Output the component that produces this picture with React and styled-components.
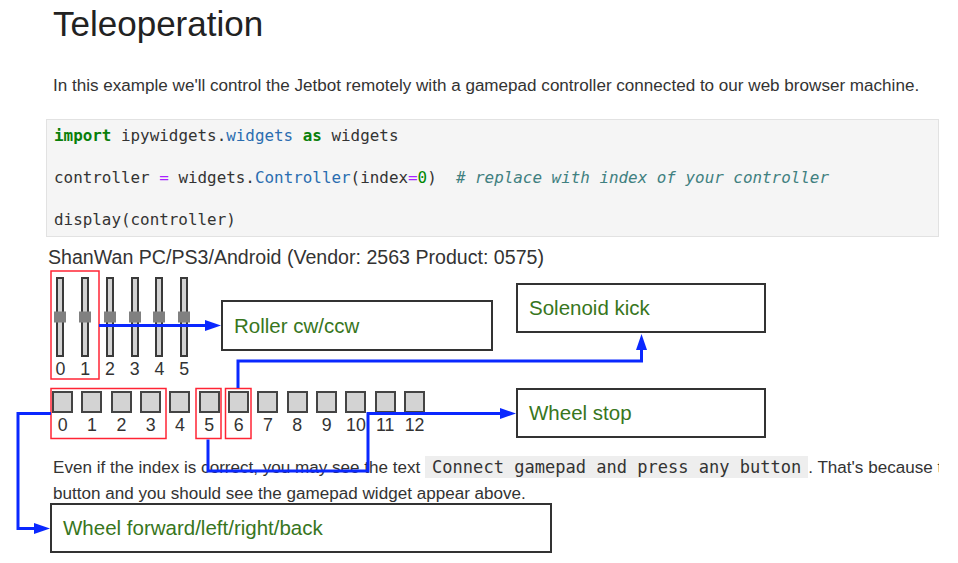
import React from "react";
import styled, { createGlobalStyle } from "styled-components";

const GlobalStyle = createGlobalStyle`
  html, body { margin: 0; padding: 0; background: #fff; }
  body { font-family: "Liberation Sans", Arial, sans-serif; overflow: hidden; }
  #root { width: 958px; height: 563px; }
`;

const Page = styled.div`
  position: relative;
  width: 958px;
  height: 563px;
  overflow: hidden;
  background: #fff;
`;

const Notebook = styled.main`
  width: 893px;
  height: 100%;
  margin-left: 46px;
  overflow: hidden;
`;

const Title = styled.h1`
  margin: 0;
  padding: 3.5px 0 0 7px;
  font-size: 35px;
  line-height: 40px;
  font-weight: 400;
  color: #222;
`;

const Para = styled.p`
  margin: ${(p) => p.$mt}px 0 0 7px;
  font-size: 17.08px;
  line-height: ${(p) => p.$lh}px;
  color: #333;
  white-space: nowrap;
`;

const InlineCode = styled.code`
  font-family: "DejaVu Sans Mono", "Liberation Mono", monospace;
  font-size: 17.05px;
  background: #eee;
  color: #333;
  padding: 1px 7px;
`;

const CodeCell = styled.div`
  margin-top: 19.7px;
  box-sizing: border-box;
  border: 1px solid #e2e2e2;
  background: #f5f5f5;
  padding: 6.4px 7px 5.6px;
  font-family: "DejaVu Sans Mono", "Liberation Mono", monospace;
  font-size: 15.9px;
  color: #333;
`;

const CodeLine = styled.div`
  height: 20.8px;
  line-height: 20.8px;
  white-space: pre;
`;

const Kw = styled.span`
  color: #0a7f0a;
  font-weight: 700;
`;
const Prop = styled.span`
  color: #2a6db0;
`;
const Op = styled.span`
  color: #aa22ff;
`;
const Num = styled.span`
  color: #008800;
`;
const Comment = styled.span`
  color: #408080;
  font-style: italic;
`;

const Widget = styled.section`
  margin: 8.6px 0 0 2px;
  color: #333;
`;

const WidgetName = styled.div`
  font-size: 19.6px;
  line-height: 22px;
  white-space: nowrap;
`;

const AxesRow = styled.div`
  display: flex;
  margin-top: 9.4px;
`;

const AxisCol = styled.div`
  width: 24.76px;
  display: flex;
  flex-direction: column;
  align-items: center;
`;

const Track = styled.div`
  position: relative;
  width: 8px;
  height: 80px;
  box-sizing: border-box;
  border: 2px solid #3a3a3a;
  background: #d3d3d3;
`;

const Thumb = styled.div`
  position: absolute;
  left: 50%;
  top: 50%;
  width: 12px;
  height: 11px;
  background: #808080;
  transform: translate(-50%, -50%);
`;

const Label = styled.div`
  margin-top: 2px;
  font-size: 17.8px;
  line-height: 20px;
  color: #333;
`;

const ButtonsRow = styled.div`
  display: flex;
  margin-top: 12px;
`;

const ButtonCol = styled.div`
  width: 29.33px;
  display: flex;
  flex-direction: column;
  align-items: center;
`;

const PadButton = styled.div`
  width: 21px;
  height: 22px;
  box-sizing: border-box;
  border: 2px solid #444;
  background: #d3d3d3;
`;

const Overlay = styled.svg`
  position: absolute;
  left: 0;
  top: 0;
  pointer-events: none;
`;

const Callout = styled.div`
  position: absolute;
  left: ${(p) => p.$x}px;
  top: ${(p) => p.$y}px;
  width: ${(p) => p.$w}px;
  height: ${(p) => p.$h}px;
  box-sizing: border-box;
  border: 2px solid #333;
  background: #fff;
  display: flex;
  align-items: center;
  padding-left: 11px;
  font-size: 20.5px;
  color: #38761d;
  white-space: nowrap;
`;

const BLUE = "#0a28ff";
const RED = "#ff2434";

export default function App() {
  const axes = [0, 1, 2, 3, 4, 5];
  const buttons = Array.from({ length: 13 }, (_, i) => i);
  return (
    <Page>
      <GlobalStyle />
      <Notebook>
        <Title>Teleoperation</Title>
        <Para $mt={28.8} $lh={27}>
          In this example we'll control the Jetbot remotely with a gamepad controller connected to our web browser machine.
        </Para>
        <CodeCell>
          <CodeLine>
            <Kw>import</Kw> ipywidgets.<Prop>widgets</Prop> <Kw>as</Kw> widgets
          </CodeLine>
          <CodeLine />
          <CodeLine>
            controller <Op>=</Op> widgets.<Prop>Controller</Prop>(index<Op>=</Op>
            <Num>0</Num>){"  "}
            <Comment># replace with index of your controller</Comment>
          </CodeLine>
          <CodeLine />
          <CodeLine>display(controller)</CodeLine>
        </CodeCell>
        <Widget>
          <WidgetName>ShanWan PC/PS3/Android (Vendor: 2563 Product: 0575)</WidgetName>
          <AxesRow>
            {axes.map((a) => (
              <AxisCol key={a}>
                <Track>
                  <Thumb />
                </Track>
                <Label>{a}</Label>
              </AxisCol>
            ))}
          </AxesRow>
          <ButtonsRow>
            {buttons.map((b) => (
              <ButtonCol key={b}>
                <PadButton />
                <Label>{b}</Label>
              </ButtonCol>
            ))}
          </ButtonsRow>
        </Widget>
        <Para $mt={19.4} $lh={26}>
          Even if the index is correct, you may see the text{" "}
          <InlineCode>Connect gamepad and press any button</InlineCode>. That's because the gamepad hasn't registered with this notebook yet. Press a
          <br />
          button and you should see the gamepad widget appear above.
        </Para>
      </Notebook>

      <Overlay width="958" height="563" viewBox="0 0 958 563">
        <g fill="none" stroke={RED} strokeWidth="1.5">
          <rect x="51" y="271" width="48" height="108" />
          <rect x="51" y="388.5" width="115" height="50" />
          <rect x="196" y="388.5" width="25" height="50" />
          <rect x="225.5" y="388.5" width="25.5" height="50" />
        </g>
        <g fill="none" stroke={BLUE} strokeWidth="3" strokeLinejoin="miter">
          <path d="M99 325.5 H206" />
          <path d="M238 388 V361 H641.5 V349" />
          <path d="M208 439.5 V471 H368 V413.5 H501" />
          <path d="M51 413.5 H18 V528.5 H35" />
        </g>
        <g fill={BLUE}>
          <polygon points="205,320 221,325.5 205,331" />
          <polygon points="636,350 641.5,334 647,350" />
          <polygon points="500,408 516,413.5 500,419" />
          <polygon points="34,523 50,528.5 34,534" />
        </g>
      </Overlay>

      <Callout $x={221} $y={300} $w={272} $h={51}>Roller cw/ccw</Callout>
      <Callout $x={516} $y={283} $w={250} $h={50}>Solenoid kick</Callout>
      <Callout $x={516} $y={388} $w={250} $h={50}>Wheel stop</Callout>
      <Callout $x={50} $y={503} $w={502} $h={50}>Wheel forward/left/right/back</Callout>
    </Page>
  );
}
